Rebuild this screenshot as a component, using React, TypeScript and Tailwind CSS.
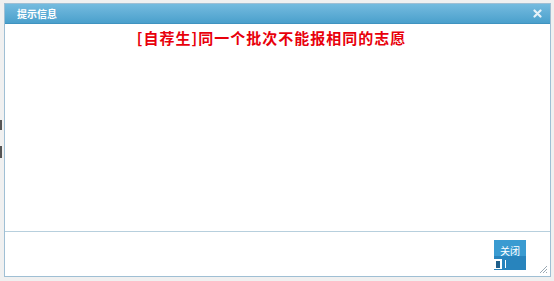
export default function App() {
  return (
    <div className="relative h-[281px] w-[554px] overflow-hidden bg-[#f0f0f0] font-['Noto_Sans_CJK_SC',sans-serif]">
      {/* background page peeking at the left edge */}
      <div className="absolute left-0 top-[120px] h-[10px] w-[2px] bg-[#555]" />
      <div className="absolute left-0 top-[146px] h-[12px] w-[2px] bg-[#555]" />

      <div className="absolute left-[4px] right-[3px] top-[3px] bottom-[4px] flex flex-col border border-[#9fbfd4] bg-white">
        <div className="flex h-[20px] items-center justify-between border-b border-[#3f93c0] bg-gradient-to-b from-[#74bbdf] to-[#4aa0cc] pl-[12px] pr-[8px]">
          <span className="text-[10px] font-bold leading-none text-white">提示信息</span>
          <svg width="9" height="9" viewBox="0 0 9 9">
            <path d="M1.5 1.5 L7.5 7.5 M7.5 1.5 L1.5 7.5" stroke="#e6f2f9" strokeWidth="2.2" strokeLinecap="round" />
          </svg>
        </div>

        <div className="flex flex-1 flex-col items-center pt-[3px]">
          <p className="pr-[12px] text-[15px] font-bold leading-[22px] tracking-[1px] text-[#e8000b]">
            [自荐生]同一个批次不能报相同的志愿
          </p>
        </div>

        <div className="relative flex h-[45px] items-start justify-end border-t border-[#b7cfdd] pr-[24px] pt-[8px]">
          <button className="relative flex h-[30px] w-[32px] flex-col overflow-hidden text-[10px] text-white">
            <span className="flex h-[16px] items-end justify-center bg-[#3a9bd1] leading-none">关闭</span>
            <span className="flex-1 bg-[#2884bd]" />
            <span className="absolute bottom-[1px] left-0 h-[10px] w-[8px] bg-white" />
            <span className="absolute bottom-[2px] left-[2px] h-[7px] w-[4px] bg-[#1f5f8a]" />
            <span className="absolute bottom-[2px] left-[11px] h-[8px] w-[1px] bg-white" />
          </button>
          <div className="absolute left-[440px] top-[27px] h-[1px] w-[40px] bg-white" />
          <svg className="absolute bottom-[2px] right-[2px]" width="10" height="10" viewBox="0 0 10 10">
            <path d="M9 2 L2 9 M9 5 L5 9 M9 8 L8 9" stroke="#9aa9b4" strokeWidth="1" />
          </svg>
        </div>
      </div>
    </div>
  );
}
